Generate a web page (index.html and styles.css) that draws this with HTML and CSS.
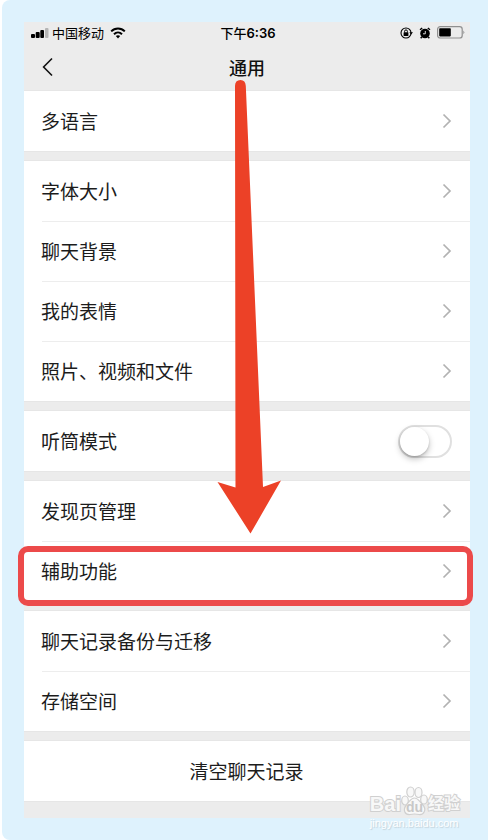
FILE: index.html
```html
<!DOCTYPE html>
<html lang="zh-CN">
<head>
    <meta charset="UTF-8">
    <meta name="viewport" content="width=device-width, initial-scale=1.0">
    <title>通用</title>
    <link rel="stylesheet" href="styles.css">
</head>
<body>
    <!-- 公用箭头 -->
    <svg class="symbols" aria-hidden="true">
        <symbol id="chevron" viewBox="0 0 10 16">
            <path d="M1.5 1.5 L8 8 L1.5 14.5" fill="none" stroke="#b2b2b2" stroke-width="1.7"/>
        </symbol>
    </svg>

    <div class="frame">
        <main class="screen">
            <div class="status-bar">
                <div class="status-left">
                    <svg class="signal" width="18" height="12" viewBox="0 0 18 12">
                        <rect x="0" y="7" width="4" height="4" rx="1"/>
                        <rect x="4.7" y="5" width="4" height="6" rx="1"/>
                        <rect x="9.3" y="3" width="3.7" height="8" rx="1"/>
                        <rect x="14" y="1" width="3.5" height="10" rx="1" fill="#b5b5b5"/>
                    </svg>
                    <span class="carrier">中国移动</span>
                    <svg width="16" height="12" viewBox="0 0 16 12">
                        <g fill="none" stroke="#000" stroke-width="2">
                            <path d="M1.2 4.4 C5 0.5 11 0.5 14.8 4.4"/>
                            <path d="M4 7.2 C6.3 5 9.7 5 12 7.2"/>
                        </g>
                        <path d="M5.8 9 Q8 7.4 10.2 9 L8 11.4 Z"/>
                    </svg>
                </div>
                <span class="time">下午<b>6:36</b></span>
                <div class="status-right">
                    <svg width="13" height="12" viewBox="0 0 13 12">
                        <circle cx="6" cy="6" r="5" fill="none" stroke="#000" stroke-width="1.1"/>
                        <path d="M9.3 5.2 H13 L11.2 7.6 Z"/>
                        <rect x="3.6" y="5.3" width="4.8" height="3.6" rx="0.5"/>
                        <path d="M4.6 5.5 V4.3 a1.4 1.4 0 0 1 2.8 0 V5.5" fill="none" stroke="#000"/>
                    </svg>
                    <svg width="12" height="12" viewBox="0 0 12 12">
                        <circle cx="6" cy="6.5" r="4.8"/>
                        <path d="M1 2.8 L3.2 1 M11 2.8 L8.8 1 M2.7 10 L1.7 11.3 M9.3 10 L10.3 11.3" stroke="#000" stroke-width="1.4"/>
                        <path d="M6.3 4 V6.8 H4" fill="none" stroke="#ececec" stroke-width="0.9"/>
                    </svg>
                    <svg width="28" height="13" viewBox="0 0 28 13">
                        <rect x="0.6" y="0.6" width="24.6" height="11.4" rx="2.6" fill="none" stroke="#8f8f8f" stroke-width="1.2"/>
                        <rect x="2.2" y="2.2" width="11.6" height="8.2" rx="0.8"/>
                        <path d="M26.4 4.4 Q28.2 6.3 26.4 8.2 Z" fill="#8f8f8f"/>
                    </svg>
                </div>
            </div>

            <header class="nav-bar">
                <button class="back" type="button" aria-label="返回">
                    <svg width="12" height="20" viewBox="0 0 12 20">
                        <path d="M10 1.5 L1.6 10 L10 18.5" fill="none" stroke="#111" stroke-width="1.6"/>
                    </svg>
                </button>
                <h1>通用</h1>
            </header>

            <div class="groups">
                <nav class="group">
                    <a class="row" href="#language"><span>多语言</span><svg class="chevron"><use href="#chevron"/></svg></a>
                </nav>
                <nav class="group">
                    <a class="row" href="#font"><span>字体大小</span><svg class="chevron"><use href="#chevron"/></svg></a>
                    <a class="row" href="#background"><span>聊天背景</span><svg class="chevron"><use href="#chevron"/></svg></a>
                    <a class="row" href="#stickers"><span>我的表情</span><svg class="chevron"><use href="#chevron"/></svg></a>
                    <a class="row" href="#media"><span>照片、视频和文件</span><svg class="chevron"><use href="#chevron"/></svg></a>
                </nav>
                <div class="group">
                    <div class="row">
                        <label for="earpiece">听筒模式</label>
                        <input class="switch" type="checkbox" id="earpiece">
                    </div>
                </div>
                <nav class="group">
                    <a class="row" href="#discover"><span>发现页管理</span><svg class="chevron"><use href="#chevron"/></svg></a>
                    <a class="row marked" href="#accessibility"><span>辅助功能</span><svg class="chevron"><use href="#chevron"/></svg></a>
                </nav>
                <nav class="group">
                    <a class="row" href="#backup"><span>聊天记录备份与迁移</span><svg class="chevron"><use href="#chevron"/></svg></a>
                    <a class="row" href="#storage"><span>存储空间</span><svg class="chevron"><use href="#chevron"/></svg></a>
                </nav>
                <div class="group">
                    <button class="row clear" type="button">清空聊天记录</button>
                </div>
            </div>

            <!-- 指向“辅助功能”的箭头 -->
            <svg class="arrow" width="64" height="454" viewBox="0 0 64 454" aria-hidden="true">
                <path d="M18 6 Q18 0 23.5 0 Q28.5 0 28.8 6 L46 407 L64 400.5 L33.5 453.5 L0.5 402 L18.5 407.5 Z" fill="#ec4127"/>
            </svg>

            <div class="watermark">
                <div class="logo">
                    <span>Bai</span>
                    <svg width="27" height="30" viewBox="0 0 27 30">
                        <g fill="#f8f8f8" stroke="#d0d0d0" stroke-width="1.2">
                            <ellipse cx="4" cy="14.5" rx="3.3" ry="4.5"/>
                            <ellipse cx="9.5" cy="6" rx="3.7" ry="5"/>
                            <ellipse cx="17.5" cy="6.5" rx="3.5" ry="5"/>
                            <ellipse cx="23" cy="13.5" rx="3.3" ry="4.5"/>
                            <path d="M13.5 12 C17 12 18 15 21 18 C27 24 22 29 18 28.5 Q13.5 27.5 9 28.5 C4 29 1 24 6 18 C9 15 10 12 13.5 12 Z"/>
                        </g>
                        <text x="13.5" y="26" text-anchor="middle">du</text>
                    </svg>
                    <span class="logo-cn">经验</span>
                </div>
                <div class="site">jingyan.baidu.com</div>
            </div>
        </main>
    </div>
</body>
</html>
```
FILE: styles.css
```css
* {
    box-sizing: border-box;
}
body {
    margin: 0;
    background-color: #fff;
    color: #1c1c1c;
    font-family: "Noto Sans CJK SC", sans-serif;
    font-size: 19px;
}
.symbols {
    position: absolute;
    width: 0;
    height: 0;
}
.frame {
    min-height: 100vh;
    margin-left: 2px;
    padding: 22px 18px 22px 22px;
    background-color: #def2fd;
    border-radius: 8px 0 0 8px;
}
.screen {
    position: relative;
    padding-bottom: 17px;
    background-color: #ececec;
}

/* 状态栏 */
.status-bar {
    display: grid;
    grid-template-columns: 1fr auto 1fr;
    align-items: center;
    height: 21px;
    padding: 0 5px 0 7px;
    color: #000;
    font-size: 13px;
    line-height: 20px;
}
.status-left,
.status-right {
    display: flex;
    align-items: center;
}
.status-left {
    gap: 3px;
}
.carrier {
    margin-right: 3px;
}
.status-right {
    justify-content: flex-end;
    gap: 6px;
}
.time {
    font-family: Inter, "Noto Sans CJK SC", sans-serif;
    font-weight: 500;
}
.time b {
    font-weight: 600;
}

/* 标题栏 */
.nav-bar {
    display: grid;
    grid-template-columns: 1fr auto 1fr;
    align-items: center;
    height: 48px;
    padding: 0 18px 1px;
}
.back {
    justify-self: start;
    display: flex;
    padding: 0;
    border: 0;
    background: none;
    cursor: pointer;
}
h1 {
    margin: 0;
    color: #111;
    font-size: 18px;
    font-weight: 500;
    line-height: 24px;
}

/* 列表 */
.groups {
    display: flex;
    flex-direction: column;
    gap: 10px;
}
.group {
    background-color: #fff;
    box-shadow: 0 1px #e6e6e6, 0 -1px #e6e6e6;
}
.row {
    position: relative;
    display: flex;
    align-items: center;
    justify-content: space-between;
    width: 100%;
    height: 60px;
    padding: 0 18px 0 17px;
    color: inherit;
    line-height: 28px;
    text-decoration: none;
}
.row + .row::before {
    content: "";
    position: absolute;
    top: 0;
    left: 18px;
    right: 0;
    height: 1px;
    background-color: #ededed;
}
.chevron {
    width: 10px;
    height: 16px;
}
.clear {
    justify-content: center;
    border: 0;
    background: none;
    font-family: inherit;
    font-size: inherit;
    cursor: pointer;
}
.switch {
    appearance: none;
    width: 54px;
    height: 33px;
    margin: 0;
    border: 2px solid #e0e0e0;
    border-radius: 17px;
    background-color: #fff;
    cursor: pointer;
}
.switch::before {
    content: "";
    display: block;
    width: 29px;
    height: 29px;
    border-radius: 50%;
    background-color: #fff;
    box-shadow: 0 3px 6px rgba(0,0,0,0.25), 0 1px 2px rgba(0,0,0,0.15);
}
.switch:checked {
    border-color: #07c160;
    background-color: #07c160;
}
.switch:checked::before {
    margin-left: auto;
}

/* 红色标注 */
.marked::after {
    content: "";
    position: absolute;
    top: 5px;
    right: -3px;
    bottom: -5px;
    left: -6px;
    border: 6px solid #ec4a4a;
    border-radius: 10px;
    z-index: 1;
}
.arrow {
    position: absolute;
    top: 58px;
    left: 50%;
    margin-left: -30px;
    pointer-events: none;
}

/* 水印 */
.watermark {
    position: absolute;
    right: 10px;
    bottom: -12px;
    color: #f8f8f8;
    font-family: "Liberation Sans", "Noto Sans CJK SC", sans-serif;
    pointer-events: none;
}
.logo {
    display: flex;
    align-items: flex-end;
    font-size: 20px;
    font-weight: bold;
    line-height: 24px;
}
.logo span {
    -webkit-text-stroke: 2px #d0d0d0;
    paint-order: stroke fill;
}
.logo svg text {
    fill: #c8c8c8;
    font-size: 14px;
}
.logo-cn {
    font-size: 16px;
}
.site {
    color: #fff;
    font-size: 11px;
    line-height: 14px;
    text-shadow: 1px 1px 1px #c0d0d8;
}
```
